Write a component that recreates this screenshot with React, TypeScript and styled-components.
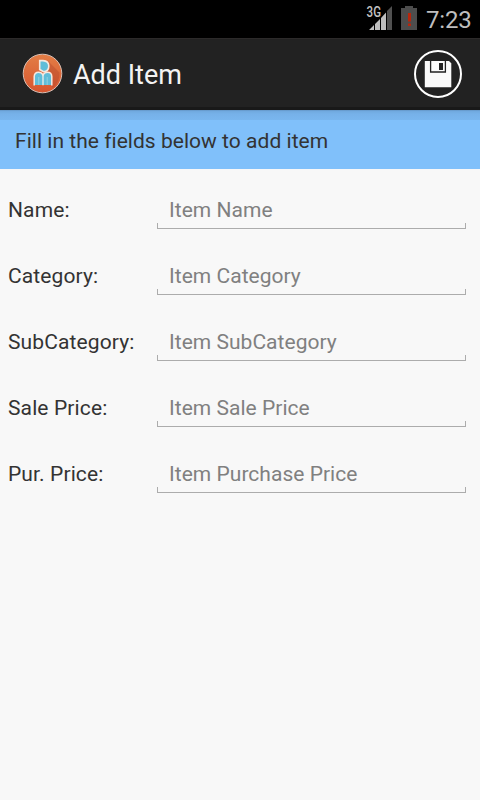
import React from 'react';
import styled, { createGlobalStyle } from 'styled-components';

const GlobalStyle = createGlobalStyle`
  * { box-sizing: border-box; }
  body { margin: 0; background: #f8f8f8; }
`;

const Screen = styled.div`
  width: 480px;
  height: 800px;
  display: flex;
  flex-direction: column;
  overflow: hidden;
  background: #f8f8f8;
  font-family: Roboto, 'Liberation Sans', sans-serif;
`;

const StatusBar = styled.div`
  height: 38px;
  flex: none;
  display: flex;
  justify-content: flex-end;
  align-items: flex-start;
  padding-right: 9px;
  background: #000;
`;

const StatusIcon = styled.svg`
  display: block;
  margin-right: 9px;
`;

const Clock = styled.span`
  width: 45px;
  font-size: 24px;
  line-height: 40px;
  letter-spacing: -0.2px;
  color: #bebebe;
  white-space: nowrap;
`;

const ActionBar = styled.header`
  height: 72px;
  flex: none;
  display: flex;
  align-items: center;
  padding: 0 18px 0 22px;
  background: #222;
  border-top: 1px solid #2c2a2a;
  border-bottom: 3px solid #191919;
`;

const Logo = styled.svg`
  display: block;
  margin-right: 10px;
`;

const Title = styled.h1`
  flex: 1;
  margin: 4px 0 0;
  font-size: 27px;
  font-weight: 400;
  line-height: 36px;
  color: #f3f3f3;
`;

const SaveButton = styled.button`
  width: 48px;
  height: 48px;
  margin-top: 1px;
  padding: 0;
  border: 0;
  background: none;
  svg { display: block; }
`;

const Banner = styled.p`
  height: 59px;
  flex: none;
  margin: 0;
  padding: 16px 15px 0;
  font-size: 21px;
  line-height: 31px;
  letter-spacing: 0.03px;
  color: #333;
  background: linear-gradient(#6090c0 0, #70a9de 1px, #76b1e9 4px, #79b6ee 10px, #80c0fa 10px);
`;

const Form = styled.div`
  display: flex;
  flex-direction: column;
  gap: 30px;
  padding: 24px 14px 0 8px;
`;

const Row = styled.div`
  display: grid;
  grid-template-columns: 149px 1fr;
  height: 36px;
`;

const Label = styled.span`
  font-size: 21px;
  line-height: 34px;
  letter-spacing: 0.12px;
  color: #333;
  white-space: nowrap;
`;

const Field = styled.div`
  height: 36px;
  padding-left: 12px;
  font-size: 21px;
  line-height: 34px;
  letter-spacing: 0.03px;
  color: #808080;
  white-space: nowrap;
  background:
    linear-gradient(#acacac, #acacac) left bottom / 100% 1px no-repeat,
    linear-gradient(#acacac, #acacac) left bottom / 1px 6px no-repeat,
    linear-gradient(#acacac, #acacac) right bottom / 1px 6px no-repeat;
`;

const fields = [
  { label: 'Name:', hint: 'Item Name' },
  { label: 'Category:', hint: 'Item Category' },
  { label: 'SubCategory:', hint: 'Item SubCategory' },
  { label: 'Sale Price:', hint: 'Item Sale Price' },
  { label: 'Pur. Price:', hint: 'Item Purchase Price' },
];

export default function App() {
  return (
    <>
      <GlobalStyle />
      <Screen>
        <StatusBar>
          <StatusIcon width="26" height="38" viewBox="0 0 26 38">
            <path d="M3 30L8 25V30zM9 24L14 19V30H9zM15 18L20 12.5V30H15z" fill="#bebebe" />
            <path d="M21 11L26 6V30H21z" fill="#505050" />
            <text x="0.6" y="17" fontSize="14" fontWeight="500" textLength="14.4" lengthAdjust="spacingAndGlyphs" stroke="#000" strokeWidth="1.2" paintOrder="stroke" fill="#c4c4c4">3G</text>
          </StatusIcon>
          <StatusIcon width="16" height="38" viewBox="0 0 16 38">
            <path d="M0 8H4V6H12V8H16V30H0z" fill="#4d4d4d" />
            <path d="M7 13H10V21.5H7zM7 23.5H10V26H7z" fill="#b8260c" />
          </StatusIcon>
          <Clock>7:23</Clock>
        </StatusBar>
        <ActionBar>
          <Logo width="41" height="41" viewBox="0 0 41 41">
            <defs>
              <linearGradient id="disc" x1="0" y1="0" x2="0" y2="1">
                <stop offset="0" stopColor="#e37e46" />
                <stop offset="1" stopColor="#d7552f" />
              </linearGradient>
            </defs>
            <circle cx="20.5" cy="20.5" r="19.3" fill="url(#disc)" stroke="#d8bfb4" strokeWidth="1" />
            <path d="M26 8L37.5 19.5Q38 28 31 35L29 32V22L25 18z" fill="#a93e29" opacity=".35" />
            <path d="M17.7 7.6H21Q26.8 8 26.8 13Q26.8 18.4 21.5 18.8L17.7 16.5z" fill="#60bdd8" stroke="#f6e8df" strokeWidth="1.6" />
            <path d="M12.2 32V23.5Q12.5 19.3 16.5 19.3Q19.5 19.3 21 22Q22.5 19.3 25.5 19.3Q29.6 19.3 29.8 23.5V32z" fill="#60bdd8" />
            <path d="M12.2 32.4V23.5Q12.5 19.3 16.5 19.3Q19.5 19.3 21 22Q22.5 19.3 25.5 19.3Q29.6 19.3 29.8 23.5V32.4" fill="none" stroke="#f6e8df" strokeWidth="1.5" />
            <path d="M21 22V32.2" stroke="#f0eeea" strokeWidth="1.3" />
            <path d="M16.8 24V32M25.2 24V32" stroke="#9ed5e2" strokeWidth=".8" />
          </Logo>
          <Title>Add Item</Title>
          <SaveButton aria-label="Save">
            <svg width="48" height="48" viewBox="0 0 48 48">
              <circle cx="24" cy="24" r="23" fill="none" stroke="#fff" strokeWidth="2" />
              <path d="M10.8 11H35L37.3 13.3V37.3H10.8z" fill="#fafafa" />
              <path d="M16.6 10.8V22H31.4V10.8" fill="none" stroke="#222" strokeWidth="1.3" />
              <rect x="25" y="13" width="4" height="7" fill="#222" />
            </svg>
          </SaveButton>
        </ActionBar>
        <Banner>Fill in the fields below to add item</Banner>
        <Form>
          {fields.map(({ label, hint }) => (
            <Row key={label}>
              <Label>{label}</Label>
              <Field>{hint}</Field>
            </Row>
          ))}
        </Form>
      </Screen>
    </>
  );
}
